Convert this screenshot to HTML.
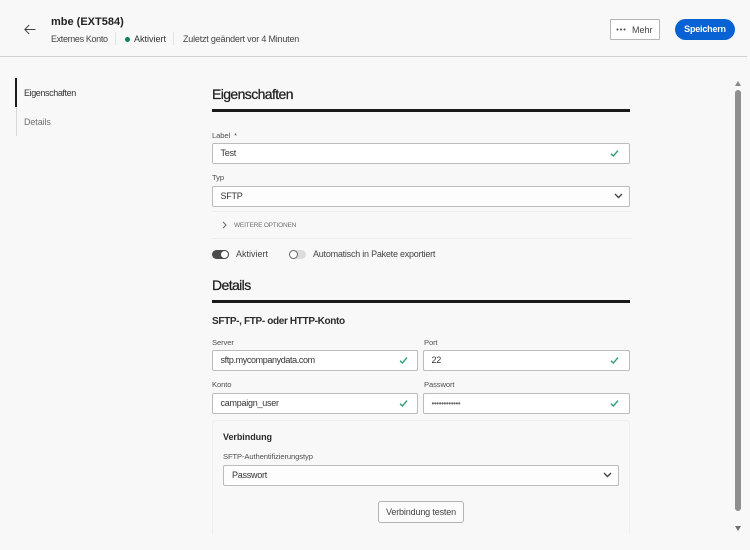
<!DOCTYPE html>
<html lang="de"><head><meta charset="utf-8"><title>mbe (EXT584)</title>
<style>
html,body{margin:0;padding:0;width:750px;height:550px;overflow:hidden;background:#f8f8f8}
body{position:relative;font-family:"Liberation Sans",sans-serif;color:#2c2c2c}
.a{position:absolute;white-space:nowrap}
.t{position:absolute;white-space:nowrap;line-height:14px;height:14px}
.lb{font-size:7.6px;color:#505050;letter-spacing:-.1px}
.in{position:absolute;box-sizing:border-box;height:21px;background:#fff;border:1px solid #bcbcbc;border-radius:2px;font-size:9px;line-height:19px;padding-left:7.5px;color:#333;letter-spacing:-.25px}
.sel{background:#fdfdfd}
.h{font-size:14px;font-weight:400;color:#1f1f1f;-webkit-text-stroke:.25px #1f1f1f;letter-spacing:-.6px}
.bar{position:absolute;left:212px;width:418px;height:3px;background:#1a1a1a}
svg{position:absolute;overflow:visible}
</style></head><body>
<div class="a" style="left:0;top:56px;width:747px;height:1px;background:#cfcfcf"></div>
<svg style="left:24px;top:24px" width="12" height="11" viewBox="0 0 12 11" fill="none" stroke="#444" stroke-width="1"><path d="M11.5 5.5H.8M5.2 1 .8 5.5 5.2 10"/></svg>
<div class="t" style="left:51px;top:15px;font-size:11px;font-weight:700;color:#222">mbe (EXT584)</div>
<div class="t" style="left:51px;top:32px;font-size:9px;color:#444;letter-spacing:-.35px">Externes Konto</div>
<div class="a" style="left:115px;top:32px;width:1px;height:13px;background:#e4e4e4"></div>
<div class="a" style="left:125px;top:36.5px;width:5px;height:5px;border-radius:50%;background:#12805c"></div>
<div class="t" style="left:134px;top:32px;font-size:9px;color:#333">Aktiviert</div>
<div class="a" style="left:173px;top:32px;width:1px;height:13px;background:#e4e4e4"></div>
<div class="t" style="left:183px;top:32px;font-size:9px;color:#444;letter-spacing:-.2px">Zuletzt geändert vor 4 Minuten</div>
<div class="a" style="left:610px;top:19px;box-sizing:border-box;width:50px;height:21px;background:#fff;border:1px solid #b4b4b4;border-radius:1px"></div>
<svg style="left:616px;top:28px" width="11" height="3" fill="#444"><circle cx="1.5" cy="1.5" r="1"/><circle cx="5" cy="1.5" r="1"/><circle cx="8.5" cy="1.5" r="1"/></svg>
<div class="t" style="left:632px;top:23px;font-size:9px;color:#444">Mehr</div>
<div class="a" style="left:675px;top:19px;width:60px;height:21px;border-radius:11px;background:#0862d3;color:#fff;font-size:9px;font-weight:700;text-align:center;line-height:20px;letter-spacing:-.2px">Speichern</div>

<div class="a" style="left:16px;top:78px;width:1px;height:58px;background:#d8d8d8"></div>
<div class="a" style="left:15px;top:78px;width:2px;height:29px;background:#1a1a1a"></div>
<div class="t" style="left:24px;top:86px;font-size:9px;color:#333;letter-spacing:-.4px">Eigenschaften</div>
<div class="t" style="left:24px;top:115px;font-size:9px;color:#707070;letter-spacing:-.1px">Details</div>

<div class="a h" style="left:212px;top:85px;line-height:18px">Eigenschaften</div>
<div class="bar" style="top:109px"></div>
<div class="t lb" style="left:212px;top:129px">Label&nbsp; *</div>
<div class="in" style="left:212px;top:143px;width:418px">Test</div>
<svg style="left:610px;top:149px" width="9" height="9" viewBox="0 0 9 9" fill="none" stroke="#2d9d78" stroke-width="1.4"><path d="M1 4.8 3.4 7 8 1.6"/></svg>
<div class="t lb" style="left:212px;top:171px">Typ</div>
<div class="in sel" style="left:212px;top:186px;width:418px">SFTP</div>
<svg style="left:614px;top:193px" width="9" height="6" viewBox="0 0 9 6" fill="none" stroke="#444" stroke-width="1.4"><path d="M1 1 4.5 4.5 8 1"/></svg>
<div class="a" style="left:212px;top:211px;width:420px;height:1px;background:#ececec"></div>
<svg style="left:222px;top:221px" width="5" height="8" viewBox="0 0 5 8" fill="none" stroke="#666" stroke-width="1"><path d="M1 .8 4 4 1 7.2"/></svg>
<div class="t" style="left:234px;top:219px;font-size:6.5px;color:#707070;letter-spacing:-.2px">WEITERE OPTIONEN</div>
<div class="a" style="left:212px;top:238px;width:420px;height:1px;background:#ececec"></div>

<div class="a" style="left:212px;top:250px;width:17px;height:9px;border-radius:5px;background:#4b4b4b"></div>
<div class="a" style="left:220px;top:250px;box-sizing:border-box;width:9px;height:9px;border-radius:50%;background:#fff;border:1px solid #4b4b4b"></div>
<div class="t" style="left:236px;top:247px;font-size:9px;color:#444">Aktiviert</div>
<div class="a" style="left:289px;top:250px;width:17px;height:9px;border-radius:5px;background:#dcdcdc"></div>
<div class="a" style="left:289px;top:250px;box-sizing:border-box;width:9px;height:9px;border-radius:50%;background:#fff;border:1px solid #666"></div>
<div class="t" style="left:313px;top:247px;font-size:9px;color:#444;letter-spacing:-.23px">Automatisch in Pakete exportiert</div>

<div class="a h" style="left:212px;top:276px;line-height:18px">Details</div>
<div class="bar" style="top:300px"></div>
<div class="t" style="left:212px;top:315px;font-size:10px;font-weight:700;color:#2c2c2c;letter-spacing:-.35px">SFTP-, FTP- oder HTTP-Konto</div>

<div class="t lb" style="left:212px;top:336px">Server</div>
<div class="in" style="left:212px;top:350px;width:206px;letter-spacing:-.38px">sftp.mycompanydata.com</div>
<svg style="left:399px;top:356px" width="9" height="9" viewBox="0 0 9 9" fill="none" stroke="#2d9d78" stroke-width="1.4"><path d="M1 4.8 3.4 7 8 1.6"/></svg>
<div class="t lb" style="left:424px;top:336px">Port</div>
<div class="in" style="left:423px;top:350px;width:207px">22</div>
<svg style="left:610px;top:356px" width="9" height="9" viewBox="0 0 9 9" fill="none" stroke="#2d9d78" stroke-width="1.4"><path d="M1 4.8 3.4 7 8 1.6"/></svg>
<div class="t lb" style="left:212px;top:378px">Konto</div>
<div class="in" style="left:212px;top:393px;width:206px">campaign_user</div>
<svg style="left:399px;top:399px" width="9" height="9" viewBox="0 0 9 9" fill="none" stroke="#2d9d78" stroke-width="1.4"><path d="M1 4.8 3.4 7 8 1.6"/></svg>
<div class="t lb" style="left:424px;top:378px">Passwort</div>
<div class="in" style="left:423px;top:393px;width:207px;font-size:8px;letter-spacing:-.4px;color:#666">••••••••••••</div>
<svg style="left:610px;top:399px" width="9" height="9" viewBox="0 0 9 9" fill="none" stroke="#2d9d78" stroke-width="1.4"><path d="M1 4.8 3.4 7 8 1.6"/></svg>

<div class="a" style="left:212px;top:420px;box-sizing:border-box;width:418px;height:114px;border:1px solid #efefef;border-bottom:0;border-radius:4px 4px 0 0"></div>
<div class="t" style="left:223px;top:430px;font-size:9px;font-weight:700;color:#2c2c2c;letter-spacing:-.05px">Verbindung</div>
<div class="t lb" style="left:223px;top:450px">SFTP-Authentifizierungstyp</div>
<div class="in sel" style="left:223px;top:465px;width:396px;padding-left:8px">Passwort</div>
<svg style="left:603px;top:472px" width="9" height="6" viewBox="0 0 9 6" fill="none" stroke="#444" stroke-width="1.4"><path d="M1 1 4.5 4.5 8 1"/></svg>
<div class="a" style="left:378px;top:501px;box-sizing:border-box;width:86px;height:22px;background:#fbfbfb;border:1px solid #b4b4b4;border-radius:3px;font-size:9px;line-height:20px;text-align:center;color:#444;letter-spacing:-.15px">Verbindung testen</div>

<div class="a" style="left:735px;top:90px;width:6px;height:421px;border-radius:3px;background:#8e8e8e"></div>
<svg style="left:735px;top:81px" width="6" height="5" fill="#8a8a8a"><path d="M3 0 6 5H0Z"/></svg>
<svg style="left:735px;top:526px" width="6" height="5" fill="#6e6e6e"><path d="M0 0H6L3 5Z"/></svg>
</body></html>
